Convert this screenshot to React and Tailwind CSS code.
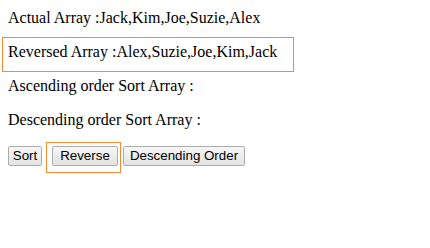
export default function App() {
  const serif = { fontFamily: '"Liberation Serif", "Times New Roman", serif' };
  const btn =
    "h-[20px] border border-[#adadad] rounded-[2px] bg-gradient-to-b from-[#f6f6f6] to-[#e3e3e3] text-[13.33px] leading-none text-black flex items-center justify-center";
  return (
    <div className="relative w-[430px] h-[248px] bg-white px-2 pt-[9px] text-black">
      <div style={serif} className="text-[16px] leading-[18px]">
        <p className="mb-4">Actual Array :Jack,Kim,Joe,Suzie,Alex</p>
        <p className="mb-4">Reversed Array :Alex,Suzie,Joe,Kim,Jack</p>
        <p className="mb-4">Ascending order Sort Array :</p>
        <p className="mb-4">Descending order Sort Array :</p>
      </div>
      <div
        className="flex items-center pt-[1px]"
        style={{ fontFamily: '"Liberation Sans", Arial, sans-serif' }}
      >
        <button className={`${btn} w-[34px]`}>Sort</button>
        <button className={`${btn} w-[66px] ml-[10px]`}>Reverse</button>
        <button className={`${btn} w-[122px] ml-[5px]`}>Descending Order</button>
      </div>

      {/* highlight annotations */}
      <div className="absolute left-[2px] top-[37px] w-[292px] h-[35px] border-[1.5px] border-[#f58a30] pointer-events-none" />
      <div className="absolute left-[46px] top-[142px] w-[75px] h-[31px] border-[1.5px] border-[#f58a30] pointer-events-none" />
    </div>
  );
}
